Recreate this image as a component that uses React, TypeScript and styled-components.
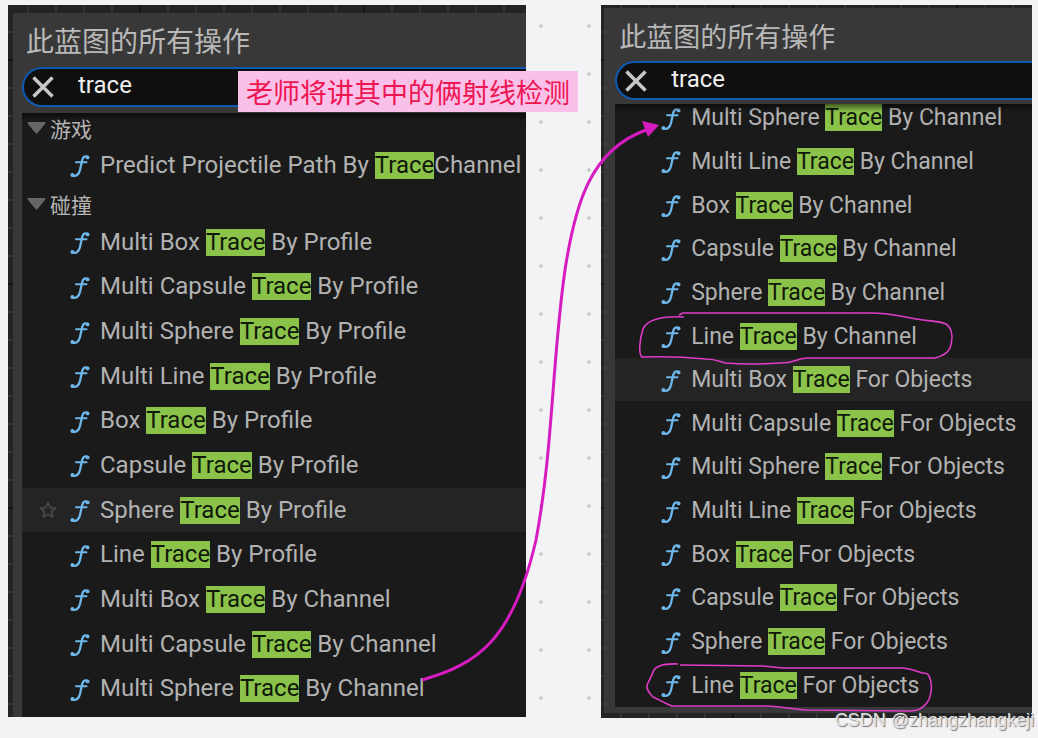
import React from "react";
import styled, { createGlobalStyle } from "styled-components";

const GlobalStyle = createGlobalStyle`
  *, *::before, *::after { box-sizing: border-box; }
  body {
    margin: 0;
    background: #f3f3f5;
    font-family: Roboto, "Noto Sans CJK SC", sans-serif;
  }
  button, input { font: inherit; color: inherit; }
  ul { list-style: none; margin: 0; padding: 0; }
`;

const Page = styled.main`
  position: relative;
  display: flex;
  align-items: flex-start;
  gap: 75px;
  padding: 5px 6px 20px 8px;
  overflow: hidden;
`;

const Graph = styled.section<{ $grow: number; $pad: string }>`
  flex: ${(p) => p.$grow} 1 0;
  min-width: 0;
  padding: ${(p) => p.$pad};
  background:
    repeating-linear-gradient(90deg, transparent 0 131px, #141414 131px 133px, transparent 133px 224px),
    repeating-linear-gradient(180deg, transparent 0 54px, #141414 54px 56px, transparent 56px 224px),
    repeating-linear-gradient(90deg, transparent 0 19px, #343434 19px 21px, transparent 21px 28px),
    repeating-linear-gradient(180deg, transparent 0 26px, #343434 26px 28px),
    #242424;
`;

const Menu = styled.div<{ $inset: number; $bottom: number }>`
  padding: 13px 0 ${(p) => p.$bottom}px ${(p) => p.$inset}px;
  background: #383838;
`;

const Title = styled.h2<{ $size: number; $gap: number }>`
  margin: 0 0 ${(p) => p.$gap}px 4px;
  font-size: ${(p) => p.$size}px;
  line-height: 34px;
  font-weight: 400;
  color: #b8b8b8;
  white-space: nowrap;
`;

const Search = styled.div<{ $height: number; $gap: number }>`
  display: flex;
  align-items: center;
  gap: 24px;
  height: ${(p) => p.$height}px;
  margin-bottom: ${(p) => p.$gap}px;
  padding-left: 8px;
  border: 2px solid #0f5ab4;
  border-right: 0;
  border-radius: 20px 0 0 20px;
  background: #0f0f0f;
`;

const ClearButton = styled.button`
  display: flex;
  width: 22px;
  height: 22px;
  padding: 0;
  border: 0;
  background: none;
  color: #c8c8c8;
`;

const SearchInput = styled.input`
  flex: 1;
  min-width: 0;
  height: 32px;
  margin: 0 0 4px;
  padding: 0;
  border: 0;
  outline: 0;
  background: none;
  font-size: 24px;
  color: #f0f0f0;
`;

const Results = styled.div<{ $bottom: number }>`
  position: relative;
  overflow: hidden;
  padding-bottom: ${(p) => p.$bottom}px;
  background: #1a1a1a;
  &::before {
    content: "";
    position: absolute;
    inset: 0 0 auto 0;
    height: 8px;
    background: linear-gradient(#0008, #0000);
  }
`;

const Category = styled.button<{ $height: number }>`
  display: flex;
  align-items: center;
  gap: 4px;
  width: 100%;
  height: ${(p) => p.$height}px;
  padding: 0 0 0 5px;
  border: 0;
  background: none;
  font-size: 21px;
  color: #b4b4b4;
`;

const Rows = styled.ul<{ $height: number; $scrolled?: number }>`
  display: grid;
  grid-auto-rows: 1fr;
  min-height: ${(p) => p.$height}px;
  margin-top: -${(p) => p.$scrolled ?? 0}px;
`;

const Row = styled.button<{ $compact: boolean; $active: boolean }>`
  display: flex;
  align-items: center;
  gap: 10px;
  width: 100%;
  height: 100%;
  padding: 0 0 0 ${(p) => (p.$compact ? 46 : 48)}px;
  border: 0;
  background: ${(p) => (p.$active ? "#242424" : "none")};
  font-size: ${(p) => (p.$compact ? 23 : 24)}px;
  line-height: 27px;
  color: #b2b2b2;
  white-space: nowrap;
`;

const StarSlot = styled.span`
  display: flex;
  margin: 0 3px 0 -31px;
`;

const Label = styled.span`
  white-space: pre;
`;

const Match = styled.mark`
  display: inline-block;
  background: #8bc34a;
  color: #10180a;
`;

const DotGrid = styled.div`
  position: absolute;
  top: 0;
  bottom: 37px;
  left: 539px;
  width: 52px;
  background: radial-gradient(circle at 2px 26px, #cfcfd1 0 2px, transparent 2px) 0 0 / 48px 48px;
`;

const Note = styled.p`
  position: absolute;
  top: 71px;
  left: 238px;
  margin: 0;
  padding: 0 8px;
  background: #f9c0ea;
  font-family: "Noto Sans CJK SC", sans-serif;
  font-size: 27px;
  line-height: 41px;
  color: #ee1550;
  white-space: nowrap;
`;

const Ink = styled.svg`
  position: absolute;
  top: 0;
  left: 0;
  pointer-events: none;
`;

const Watermark = styled.span`
  position: absolute;
  right: 4px;
  bottom: 6px;
  font-family: "Liberation Sans", sans-serif;
  font-size: 18px;
  line-height: 24px;
  color: #e4e4e6;
  text-shadow: 1px 1px 1px #777;
`;

const FunctionIcon = () => (
  <svg width="20" height="24" viewBox="0 0 20 24" fill="none" stroke="#6db7ea" strokeWidth="2.300" strokeLinecap="round" aria-hidden="true">
    <path d="M18 4.200 C15.500 2.500 13 3.500 12.200 7 L10 17 C9 21.500 6 24 2 22.300" />
    <path d="M6 9.200 H16.500" strokeWidth="2" />
    <circle cx="17.600" cy="4.400" r="0.800" />
    <circle cx="2.400" cy="22" r="0.800" />
  </svg>
);

const CloseIcon = () => (
  <svg width="22" height="22" viewBox="0 0 22 22" stroke="currentColor" strokeWidth="3.500" aria-hidden="true">
    <path d="M1.500 1.500 L20.500 20.500 M20.500 1.500 L1.500 20.500" />
  </svg>
);

const Caret = () => (
  <svg width="19" height="12" viewBox="0 0 19 12" fill="#666" aria-hidden="true">
    <path d="M1 0 H18 Q19 1 18 2 L10.500 11 Q9.500 12 8.500 11 L1 2 Q0 1 1 0 Z" />
  </svg>
);

const Star = () => (
  <svg width="18" height="18" viewBox="0 0 18 18" fill="none" stroke="#484848" strokeWidth="1.800" strokeLinejoin="round" aria-hidden="true">
    <path d="M9 1.500 L11.200 6.600 L16.600 7.100 L12.500 10.700 L13.700 16 L9 13.200 L4.300 16 L5.500 10.700 L1.400 7.100 L6.800 6.600 Z" />
  </svg>
);

type ActionProps = { text: string; compact?: boolean; active?: boolean; star?: boolean };

const Action = ({ text, compact = false, active = false, star = false }: ActionProps) => {
  const [before, after] = text.split("Trace");
  return (
    <li>
      <Row $compact={compact} $active={active}>
        {star && (
          <StarSlot>
            <Star />
          </StarSlot>
        )}
        <FunctionIcon />
        <Label>
          {before}
          <Match>Trace</Match>
          {after}
        </Label>
      </Row>
    </li>
  );
};

const SearchBox = ({ height, gap }: { height: number; gap: number }) => (
  <Search $height={height} $gap={gap}>
    <ClearButton aria-label="Clear">
      <CloseIcon />
    </ClearButton>
    <SearchInput aria-label="Search" defaultValue="trace" />
  </Search>
);

const profileActions = [
  "Multi Box Trace By Profile",
  "Multi Capsule Trace By Profile",
  "Multi Sphere Trace By Profile",
  "Multi Line Trace By Profile",
  "Box Trace By Profile",
  "Capsule Trace By Profile",
  "Sphere Trace By Profile",
  "Line Trace By Profile",
  "Multi Box Trace By Channel",
  "Multi Capsule Trace By Channel",
  "Multi Sphere Trace By Channel",
];

const channelActions = [
  "Multi Sphere Trace By Channel",
  "Multi Line Trace By Channel",
  "Box Trace By Channel",
  "Capsule Trace By Channel",
  "Sphere Trace By Channel",
  "Line Trace By Channel",
  "Multi Box Trace For Objects",
  "Multi Capsule Trace For Objects",
  "Multi Sphere Trace For Objects",
  "Multi Line Trace For Objects",
  "Box Trace For Objects",
  "Capsule Trace For Objects",
  "Sphere Trace For Objects",
  "Line Trace For Objects",
];

export default function App() {
  return (
    <>
      <GlobalStyle />
      <Page>
        <DotGrid />
        <Graph $grow={517} $pad="8px 0 0 5px">
          <Menu $inset={9} $bottom={0}>
            <Title $size={28} $gap={7}>此蓝图的所有操作</Title>
            <SearchBox height={40} gap={6} />
            <Results $bottom={6}>
              <Category $height={29}>
                <Caret />
                游戏
              </Category>
              <Rows $height={46}>
                <Action text="Predict Projectile Path By TraceChannel" />
              </Rows>
              <Category $height={32}>
                <Caret />
                碰撞
              </Category>
              <Rows $height={491}>
                {profileActions.map((text, i) => (
                  <Action key={text} text={text} active={i === 6} star={i === 6} />
                ))}
              </Rows>
            </Results>
          </Menu>
        </Graph>
        <Graph $grow={431} $pad="3px 0 5px 3px">
          <Menu $inset={11} $bottom={6}>
            <Title $size={27} $gap={6}>此蓝图的所有操作</Title>
            <SearchBox height={39} gap={4} />
            <Results $bottom={0}>
              <Rows $height={611} $scrolled={8}>
                {channelActions.map((text, i) => (
                  <Action key={text} compact text={text} active={i === 6} />
                ))}
              </Rows>
            </Results>
          </Menu>
        </Graph>
        <Note>老师将讲其中的俩射线检测</Note>
        <Ink width="1038" height="738" viewBox="0 0 1038 738" fill="none" aria-hidden="true">
          <path d="M422 680 C478 664 513 640 536 540 C553 450 552 360 565 270 C575 205 590 150 646 130" stroke="#d61cc0" strokeWidth="3" />
          <path d="M659 125 L642 121 L648 137 Z" fill="#d61cc0" />
          <g stroke="#e03cc8" strokeWidth="1.600" strokeLinejoin="round">
            <path d="M679 315 L683 313 H870 C892 313 904 317 916 319 S940 321 946 324 C953 329 953 339 950 348 Q947 355 935 358 H807 C795 359 795 363 780 363 Q750 365 725 363 C718 361 715 359 706 359 Q675 356 642 357 C638 354 640 338 643 329 C648 318 664 316 684 317" />
            <path d="M680 665 L763 666 L783 668 H903 C914 669 918 672 923 673 Q928 673 929 676 C933 683 932 697 926 704 Q920 711 910 711 L807 710 C790 709 778 706 767 706 H672 C664 703 658 699 653 697 Q646 690 647 685 C650 679 652 675 653 672 Q656 663 678 664" />
          </g>
        </Ink>
        <Watermark>CSDN @zhangzhangkeji</Watermark>
      </Page>
    </>
  );
}
